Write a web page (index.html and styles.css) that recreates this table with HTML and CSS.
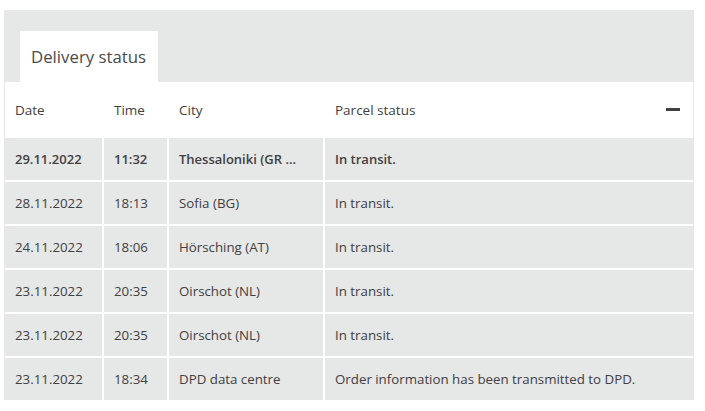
FILE: index.html
```html
<!DOCTYPE html>
<html lang="en">
<head>
<meta charset="utf-8">
<title>Delivery status</title>
<link rel="stylesheet" href="styles.css">
</head>
<body>
<section class="panel">
  <div class="tabs">
    <div class="tab">Delivery status</div>
  </div>
  <div class="table">
    <div class="row head">
      <div class="cell">Date</div>
      <div class="cell">Time</div>
      <div class="cell">City</div>
      <div class="cell status">Parcel status<span class="minus"></span></div>
    </div>
    <div class="row first">
      <div class="cell">29.11.2022</div>
      <div class="cell">11:32</div>
      <div class="cell">Thessaloniki (GR ...</div>
      <div class="cell">In transit.</div>
    </div>
    <div class="row">
      <div class="cell">28.11.2022</div>
      <div class="cell">18:13</div>
      <div class="cell">Sofia (BG)</div>
      <div class="cell">In transit.</div>
    </div>
    <div class="row">
      <div class="cell">24.11.2022</div>
      <div class="cell">18:06</div>
      <div class="cell">Hörsching (AT)</div>
      <div class="cell">In transit.</div>
    </div>
    <div class="row">
      <div class="cell">23.11.2022</div>
      <div class="cell">20:35</div>
      <div class="cell">Oirschot (NL)</div>
      <div class="cell">In transit.</div>
    </div>
    <div class="row">
      <div class="cell">23.11.2022</div>
      <div class="cell">20:35</div>
      <div class="cell">Oirschot (NL)</div>
      <div class="cell">In transit.</div>
    </div>
    <div class="row">
      <div class="cell">23.11.2022</div>
      <div class="cell">18:34</div>
      <div class="cell">DPD data centre</div>
      <div class="cell">Order information has been transmitted to DPD.</div>
    </div>
  </div>
</section>
</body>
</html>
```

FILE: styles.css
```css
html, body {
  margin: 0;
  padding: 0;
  background: #ffffff;
}
body {
  font-family: "Open Sans", "Liberation Sans", sans-serif;
  color: #414042;
}
.panel {
  margin: 10px 0 0 4px;
  width: 690px;
  background: #e6e7e7;
  padding: 21px 1px 0 1px;
  box-sizing: border-box;
}
.tabs {
  display: flex;
  padding-left: 15px;
}
.tab {
  background: #ffffff;
  height: 51px;
  width: 138px;
  box-sizing: border-box;
  padding-left: 11px;
  display: flex;
  align-items: center;
  font-size: 16.8px;
  color: #4a4a4d;
}
.table {
  display: flex;
  flex-direction: column;
  gap: 2px;
  background: #ffffff;
}
.row {
  display: grid;
  grid-template-columns: 97px 63px 154px 368px;
  column-gap: 2px;
  height: 42px;
  background: #ffffff;
}
.row.head {
  height: 54px;
}
.cell {
  background: #e6e7e7;
  display: flex;
  align-items: center;
  padding-left: 10px;
  font-size: 13.3px;
  white-space: nowrap;
  overflow: hidden;
}
.head .cell {
  background: #ffffff;
  padding-top: 1px;
  font-size: 13.5px;
}
.first .cell {
  font-weight: 600;
  font-size: 13px;
}
.status {
  justify-content: space-between;
  padding-right: 13px;
}
.minus {
  display: block;
  width: 14px;
  height: 3px;
  background: #414042;
}
```
